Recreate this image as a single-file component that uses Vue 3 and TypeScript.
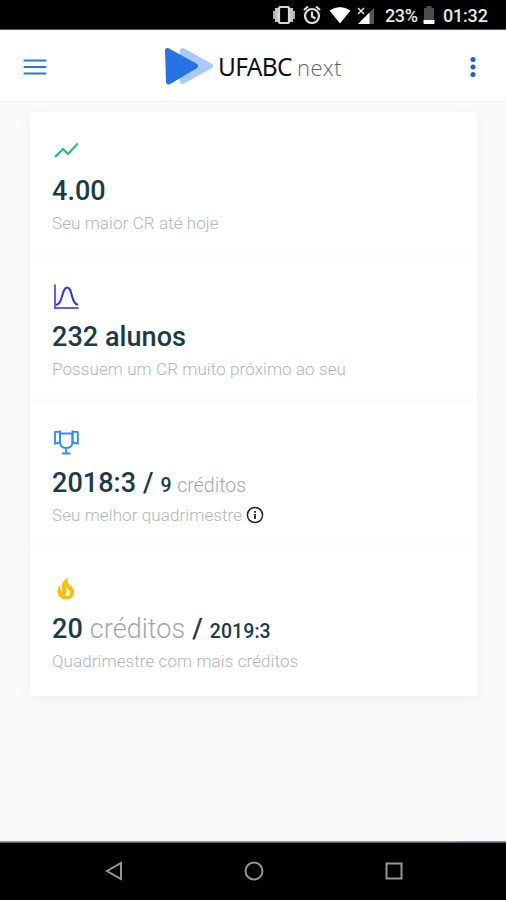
<script setup lang="ts">
interface Part { text: string; kind: string }
interface Stat { icon: string; parts: Part[]; caption: string; info?: boolean }

const stats: Stat[] = [
  { icon: 'trend', parts: [{ text: '4.00', kind: 'strong' }], caption: 'Seu maior CR até hoje' },
  { icon: 'bell', parts: [{ text: '232 alunos', kind: 'strong' }], caption: 'Possuem um CR muito próximo ao seu' },
  {
    icon: 'trophy',
    parts: [{ text: '2018:3 /', kind: 'strong' }, { text: '9', kind: 'strong small' }, { text: 'créditos', kind: 'light small' }],
    caption: 'Seu melhor quadrimestre',
    info: true,
  },
  {
    icon: 'fire',
    parts: [{ text: '20', kind: 'strong' }, { text: 'créditos', kind: 'light' }, { text: '/', kind: 'strong' }, { text: '2019:3', kind: 'strong small' }],
    caption: 'Quadrimestre com mais créditos',
  },
]
</script>

<template>
  <div class="screen">
    <div class="status">
      <svg class="status-icons" width="104" height="22" viewBox="0 0 104 22">
        <path d="M2 9v8M22 9v8" stroke="#aaa" stroke-width="2" />
        <path d="M5 6v14M19 6v14" stroke="#c4c4c4" stroke-width="4" />
        <rect x="7" y="5" width="10" height="16" rx="1.500" fill="#000" stroke="#d8d8d8" stroke-width="2.200" />
        <g fill="none" stroke="#ddd" stroke-width="2.200">
          <circle cx="40" cy="14" r="7" />
          <path d="M40 9.500v5l3.500 2M32 8l4-3.500M48 8L44 4.500" />
        </g>
        <path d="M57.500 8.500Q68 1.500 78.500 8.500L68 21.500Z" fill="#fff" />
        <path d="M102 6v16H86Z" fill="#555" />
        <path d="M97.500 10.500V22H86Z" fill="#fff" />
        <path d="M86 6l6 6M92 6l-6 6" stroke="#ddd" stroke-width="1.600" />
      </svg>
      <span class="percent">23%</span>
      <svg class="battery" width="12" height="20" viewBox="0 0 12 20">
        <path d="M3.500 1h5v2H11v15q0 1-1 1H2q-1 0-1-1V3h2.500Z" fill="#4c4c4c" />
        <path d="M0.500 15h11v3q0 1-1 1H1.500q-1 0-1-1Z" fill="#fff" />
      </svg>
      <span class="clock">01:32</span>
    </div>

    <header class="bar">
      <svg class="menu" width="24" height="18" viewBox="0 0 24 18">
        <path d="M1.500 2.500h21M1.500 9h21M1.500 15.500h21" stroke="#2a77cf" stroke-width="2.200" stroke-linecap="round" />
      </svg>
      <div class="brand">
        <svg class="mark" width="50" height="40" viewBox="0 0 50 40" stroke-linejoin="round" stroke-width="5">
          <path d="M18.500 3.500L46.500 19L18.500 34.500Z" fill="#a9c9fa" stroke="#a9c9fa" />
          <path d="M3.500 3.500L31.500 19L4.500 35Z" fill="#2673e6" stroke="#2673e6" />
        </svg>
        <span class="name">UFABC</span>
        <span class="next">next</span>
      </div>
      <svg class="dots" width="6" height="22" viewBox="0 0 6 22" fill="#1763cf">
        <circle cx="3" cy="3.500" r="2.500" /><circle cx="3" cy="11" r="2.500" /><circle cx="3" cy="18.500" r="2.500" />
      </svg>
    </header>

    <main class="content">
      <section class="panel">
        <article v-for="stat in stats" :key="stat.icon" class="stat">
          <svg class="icon" width="28" height="28" viewBox="0 0 28 28" fill="none">
            <path v-if="stat.icon === 'trend'" d="M3 20L11 12L16 17L25.800 6.500" stroke="#22c07d" stroke-width="2.200" />
            <template v-else-if="stat.icon === 'bell'">
              <path d="M3 1.500V25H26.500" stroke="#5f5fec" stroke-width="2" />
              <path d="M4 21.800C11 21.800 9.500 4.500 15.200 4.500S18.500 20.500 26 21.800" stroke="#3037dd" stroke-width="2" />
            </template>
            <g v-else-if="stat.icon === 'trophy'" stroke="#2f8ff8" stroke-width="1.900">
              <path d="M8 4.500H20.500V13Q20.500 19 14.200 19Q8 19 8 13ZM14.200 19V24M10 24.500H18.500" />
              <path d="M8 13.500L3 14.500V3L8 2.500ZM20.500 13.500L25.800 14.500V3L20.500 2.500Z" />
            </g>
            <path v-else transform="translate(-0.500 -0.800) scale(1.200)" fill="#fbbd12" d="M17.660 11.200c-.23-.3-.51-.56-.77-.82-.67-.6-1.430-1.030-2.070-1.660C13.330 7.260 13 4.850 13.950 3c-.95.23-1.780.75-2.490 1.320-2.590 2.080-3.610 5.750-2.390 8.900.04.1.08.2.08.33 0 .22-.15.42-.35.5-.23.1-.47.04-.66-.12a.6.600 0 0 1-.14-.17c-1.130-1.430-1.310-3.480-.55-5.120C5.780 10 4.870 12.300 5 14.470c.06.5.12 1 .29 1.500.14.600.41 1.200.71 1.730 1.080 1.730 2.950 2.970 4.960 3.220 2.140.27 4.430-.12 6.070-1.600 1.830-1.660 2.470-4.320 1.530-6.600l-.13-.26c-.21-.46-.77-1.260-.77-1.260m-3.160 6.300c-.28.24-.74.5-1.100.6-1.120.4-2.240-.16-2.900-.82 1.190-.28 1.900-1.160 2.110-2.050.17-.8-.15-1.460-.28-2.230-.12-.74-.1-1.370.17-2.060.19.38.39.76.63 1.060.77 1 1.980 1.440 2.240 2.800.04.14.06.28.06.43.03.82-.33 1.720-.93 2.270" />
          </svg>
          <div class="value">
            <span v-for="(part, i) in stat.parts" :key="i" :class="part.kind">{{ part.text }}</span>
          </div>
          <div class="caption">
            <span>{{ stat.caption }}</span>
            <svg v-if="stat.info" class="info" width="18" height="18" viewBox="0 0 18 18">
              <circle cx="9" cy="9" r="7.600" fill="none" stroke="#222" stroke-width="1.500" />
              <path d="M9 8v5M9 5v1.800" stroke="#222" stroke-width="1.800" />
            </svg>
          </div>
        </article>
      </section>
    </main>

    <div class="edge"><span class="edge-accent"></span></div>
    <nav class="nav">
      <svg width="20" height="20" viewBox="0 0 20 20"><path d="M17 2V18L3 10Z" /></svg>
      <svg width="20" height="20" viewBox="0 0 20 20"><circle cx="10" cy="10" r="8.500" /></svg>
      <svg width="20" height="20" viewBox="0 0 20 20"><rect x="2.500" y="2.500" width="15" height="15" /></svg>
    </nav>
  </div>
</template>

<style>
body { margin: 0; }
</style>

<style scoped>
.screen { display: flex; flex-direction: column; width: 506px; height: 900px; overflow: hidden; background: #fafafa; font-family: Roboto, "Liberation Sans", sans-serif; }
svg { display: block; flex: none; }
.status { box-sizing: border-box; display: flex; height: 30px; padding-left: 272px; background: #000; border-bottom: 1px solid #555; color: #e8e8e8; font-size: 18px; font-weight: 500; line-height: 32px; flex: none; }
.status-icons { margin-top: 2px; }
.percent { width: 36px; margin-left: 9px; letter-spacing: -0.4px; }
.battery { margin: 5px 8px 0 2px; }
.clock { letter-spacing: -0.2px; }
.bar { box-sizing: border-box; display: flex; align-items: center; height: 72px; padding: 2px 30px 0 23px; background: #fff; border-bottom: 1px solid #f2f2f2; flex: none; }
.brand { display: flex; align-items: center; margin-left: 117px; }
.name { width: 79px; margin-left: 4px; color: #111; font: 400 24.500px/36px "Noto Sans", sans-serif; letter-spacing: -0.7px; }
.next { color: #666; font: 300 22px/36px "Open Sans", sans-serif; letter-spacing: 0.4px; padding-top: 1px; }
.dots { margin-left: auto; }
.content { flex: 1; padding: 10px 29px 0 30px; }
.panel { background: #fff; border-radius: 3px; box-shadow: 0 3px 14px rgba(0, 0, 0, 0.05); }
.stat { box-sizing: border-box; height: 146px; padding: 25px 22px 0; background: linear-gradient(#fff 134px, #fcfcfc); }
.stat:last-child { background: none; }
.value { display: flex; align-items: baseline; gap: 7px; height: 34px; margin-top: 9px; font-size: 27px; line-height: 34px; letter-spacing: 0.05px; white-space: nowrap; }
.strong { color: #1b3b49; font-weight: 500; }
.light { color: #a0a8ac; font-weight: 300; }
.small { font-size: 19.500px; }
.light.small { margin-left: -1.500px; }
.caption { display: flex; align-items: center; gap: 4px; margin-top: 4px; height: 22px; color: #b0b6ba; font-size: 17px; font-weight: 300; line-height: 22px; letter-spacing: 0.09px; }
.edge { display: flex; justify-content: flex-end; height: 2px; background: linear-gradient(#b8b8b8, #4a4a4a); flex: none; }
.edge-accent { width: 52px; background: linear-gradient(#8fb4c6, #304e5c); }
.nav { box-sizing: border-box; display: flex; align-items: center; justify-content: center; gap: 120px; height: 57px; padding: 0 0 1px 1px; background: #000; flex: none; }
.nav svg { fill: none; stroke: #969696; stroke-width: 2; }
</style>
